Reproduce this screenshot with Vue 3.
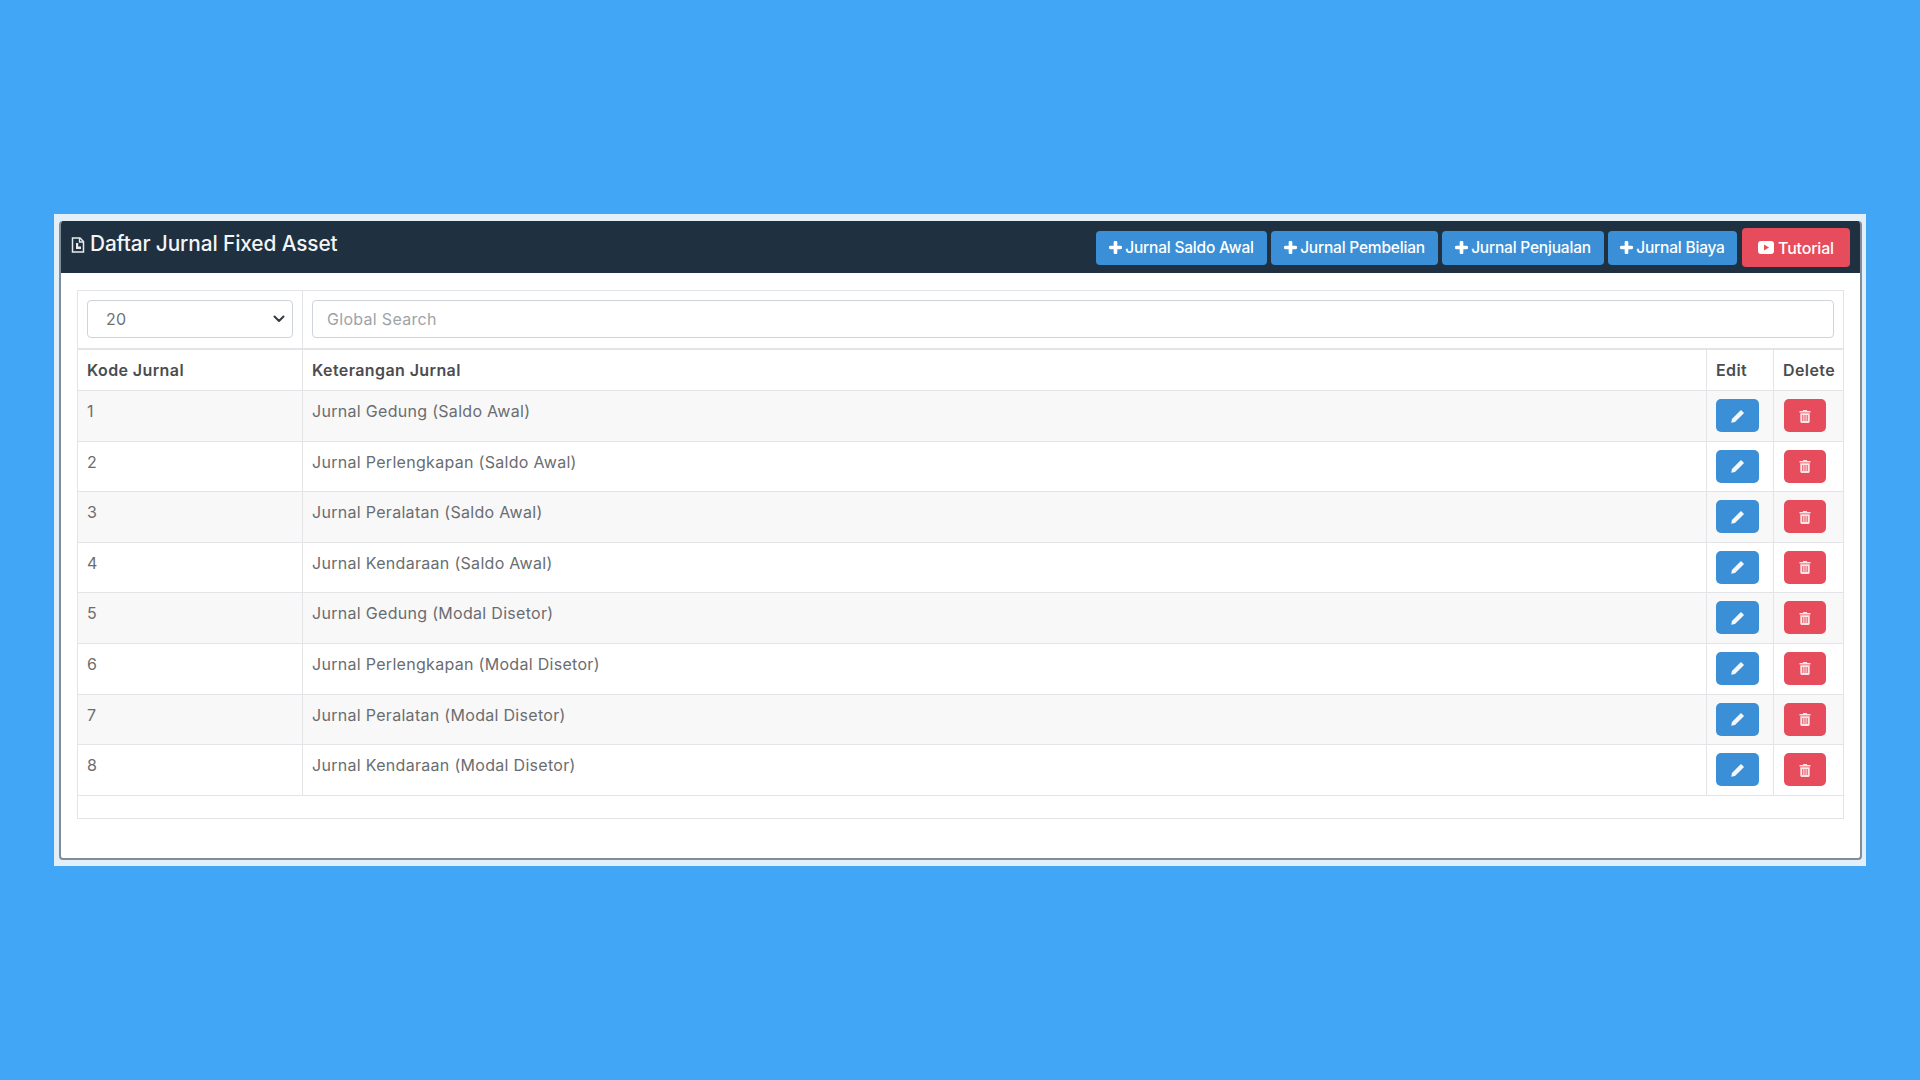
<script setup>
const actions = [
  { label: 'Jurnal Saldo Awal', width: '171px' },
  { label: 'Jurnal Pembelian', width: '167px' },
  { label: 'Jurnal Penjualan', width: '162px' },
  { label: 'Jurnal Biaya', width: '129px' }
]
const rows = [
  'Jurnal Gedung (Saldo Awal)',
  'Jurnal Perlengkapan (Saldo Awal)',
  'Jurnal Peralatan (Saldo Awal)',
  'Jurnal Kendaraan (Saldo Awal)',
  'Jurnal Gedung (Modal Disetor)',
  'Jurnal Perlengkapan (Modal Disetor)',
  'Jurnal Peralatan (Modal Disetor)',
  'Jurnal Kendaraan (Modal Disetor)'
]
</script>

<template>
  <main class="page">
    <section class="frame">
      <div class="panel">
        <header class="head">
          <h1 class="title">
            <svg class="file" viewBox="0 0 14 16" aria-hidden="true">
              <path d="M1.500 1h7.500l3.500 3.500V15h-11z" fill="none" stroke="#e8ebee" stroke-width="1.500" />
              <path d="M8.500 1v4h4" fill="none" stroke="#e8ebee" stroke-width="1.300" />
              <path d="M5 6v6h5v-2.500H7.200V6z" fill="#e8ebee" />
            </svg>
            <span>Daftar Jurnal Fixed Asset</span>
          </h1>
          <div class="actions">
            <button v-for="a in actions" :key="a.label" class="btn blue" :style="{ width: a.width }">
              <svg class="plus" viewBox="0 0 12 12" aria-hidden="true">
                <path d="M6 1.500v9M1.500 6h9" stroke="#fff" stroke-width="3.400" stroke-linecap="round" />
              </svg>
              {{ a.label }}
            </button>
            <button class="btn red tutorial">
              <svg class="yt" viewBox="0 0 16 13" aria-hidden="true">
                <rect width="16" height="13" rx="3" fill="#fff" />
                <path d="M6 3.500v6l5-3z" fill="#e64c5b" />
              </svg>
              Tutorial
            </button>
          </div>
        </header>

        <div class="body">
          <table class="grid">
            <colgroup>
              <col class="c1" /><col /><col class="c3" /><col class="c4" />
            </colgroup>
            <thead>
              <tr class="filters">
                <td class="filter-select">
                  <div class="select">
                    <span>20</span>
                    <svg class="chev" viewBox="0 0 12 8" aria-hidden="true">
                      <path d="M1.500 1.500 6 6l4.500-4.500" fill="none" stroke="#343a40" stroke-width="2" stroke-linecap="round" stroke-linejoin="round" />
                    </svg>
                  </div>
                </td>
                <td colspan="3" class="filter-search">
                  <input class="search" type="text" placeholder="Global Search" />
                </td>
              </tr>
              <tr class="labels">
                <th>Kode Jurnal</th>
                <th>Keterangan Jurnal</th>
                <th>Edit</th>
                <th>Delete</th>
              </tr>
            </thead>
            <tbody>
              <tr v-for="(r, i) in rows" :key="r" class="row">
                <td>{{ i + 1 }}</td>
                <td>{{ r }}</td>
                <td>
                  <button class="mini blue edit" aria-label="Edit">
                    <svg viewBox="0 0 14 14" aria-hidden="true">
                      <path d="M9.600 1.700l2.700 2.700-7.900 7.900-3.300.6.600-3.300z" fill="#f4f8fc" />
                    </svg>
                  </button>
                </td>
                <td>
                  <button class="mini red del" aria-label="Delete">
                    <svg viewBox="0 0 12 14" aria-hidden="true">
                      <path d="M4.200 1h3.600l.5 1h3.200v1.500H.5V2h3.200zM1.300 4.300h9.400V13l-1 1H2.300l-1-1z" fill="#fff" opacity=".85" />
                      <path d="M3.800 6v6M6 6v6M8.200 6v6" stroke="#e64c5b" stroke-width="1" />
                    </svg>
                  </button>
                </td>
              </tr>
              <tr class="foot"><td colspan="4"></td></tr>
            </tbody>
          </table>
        </div>
      </div>
    </section>
  </main>
</template>

<style>
html, body { margin: 0; background: #40a6f5; }
</style>

<style scoped>
.page {
  width: 1920px;
  height: 1080px;
  padding: 214px 54px 0;
  box-sizing: border-box;
  background: #40a6f5;
  font-family: Inter, "Noto Sans", sans-serif;
  overflow: hidden;
}
.frame {
  width: 1812px;
  height: 652px;
  box-sizing: border-box;
  padding: 7px 4px 6px 5px;
  background: #e2eef8;
}
.panel {
  height: 639px;
  box-sizing: border-box;
  background: #fff;
  border: 1px solid #7f8c99;
  border-width: 0 2px 2px 2px;
  border-radius: 4px;
  overflow: hidden;
}
.head {
  display: flex;
  justify-content: space-between;
  align-items: center;
  height: 52px;
  padding: 0 12px 0 11px;
  margin: 0 -2px;
  background: #1f3040;
}
.title {
  display: flex;
  align-items: center;
  gap: 5px;
  margin: -8px 0 0;
  padding-left: 1px;
  color: #f3f5f7;
  font-size: 20.800px;
  font-weight: 500;
  letter-spacing: -0.1px;
}
.file { width: 14px; height: 16px; margin-top: 3px; }
.actions { display: flex; align-items: center; gap: 4px; margin-top: 1px; }
.btn {
  display: flex;
  align-items: center;
  justify-content: center;
  gap: 3px;
  height: 34px;
  padding: 0;
  border: 0;
  border-radius: 4px;
  color: #fff;
  font: 500 15.500px Inter, "Noto Sans", sans-serif;
  letter-spacing: -0.2px;
  white-space: nowrap;
}
.blue { background: #3a8fd6; }
.red { background: #e64c5b; }
.tutorial { width: 108px; height: 39px; margin-left: 1px; font-size: 16px; gap: 4px; }
.plus { width: 13px; height: 13px; }
.yt { width: 16px; height: 13px; }
.body { padding: 17px 16px 0 16px; }
.grid {
  width: 100%;
  table-layout: fixed;
  border-collapse: collapse;
  border: 1px solid #e2e4e7;
  color: #6a6d70;
  font-size: 16px;
  letter-spacing: 0.3px;
}
.c1 { width: 225px; }
.c3 { width: 67px; }
.c4 { width: 70px; }
td, th {
  box-sizing: border-box;
  padding: 0 9px;
  border: 1px solid #e2e4e7;
  text-align: left;
  vertical-align: top;
}
.filters td { height: 58px; padding-top: 9px; border-bottom-width: 2px; }
.filter-search { border-left-color: transparent; }
.select {
  display: flex;
  align-items: center;
  justify-content: space-between;
  box-sizing: border-box;
  width: 206px;
  height: 38px;
  padding: 0 7px 0 18px;
  border: 1px solid #ced4da;
  border-radius: 4px;
  color: #6d7277;
  font-size: 16px;
}
.chev { width: 12px; height: 8px; }
.search {
  display: block;
  box-sizing: border-box;
  width: 100%;
  height: 38px;
  padding: 0 14px;
  border: 1px solid #ced4da;
  border-radius: 4px;
  outline: none;
  background: #fff;
  font: 16px Inter, "Noto Sans", sans-serif;
  letter-spacing: 0.3px;
}
.search::placeholder { color: #9ea3a8; opacity: 1; }
.labels th {
  height: 42px;
  vertical-align: middle;
  color: #4a4d50;
  font-size: 16px;
  font-weight: 600;
  letter-spacing: 0.4px;
}
.row td { height: 50.600px; padding-top: 10px; }
.row:nth-child(odd) td { background: #f8f8f8; }
.foot td { height: 23px; padding: 0; }
.mini {
  display: flex;
  align-items: center;
  justify-content: center;
  height: 33px;
  margin-top: -2px;
  padding: 0;
  border: 0;
  border-radius: 5px;
}
.edit { width: 43px; }
.del { width: 42px; margin-left: 1px; }
.edit svg { width: 16px; height: 16px; }
.del svg { width: 12px; height: 14px; }
</style>
